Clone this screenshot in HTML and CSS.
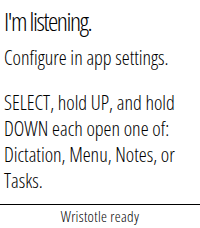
FILE: index.html
```html
<!DOCTYPE html>
<html>
<head>
    <title>Wristotle</title>
    <link rel="stylesheet" href="styles.css">
</head>
<body>
    <div id="screen">
        <div class="content">
            <h1 class="title">I'm listening.</h1>
            <p class="message">Configure in app settings.</p>
            <p class="message">SELECT, hold UP, and hold DOWN each open one of: Dictation, Menu, Notes, or Tasks.</p>
        </div>
        <div class="status">Wristotle ready</div>
    </div>
</body>
</html>
```

FILE: styles.css
```css
body {
    margin: 0;
    background-color: #fff;
    color: #000;
    font-family: "Open Sans", sans-serif;
    font-stretch: condensed;
}
#screen {
    width: 200px;
    height: 228px;
    display: flex;
    flex-direction: column;
}
.content {
    flex: 1;
    min-height: 0;
    padding: 5px 4px 0 4px;
}
.title {
    margin: 0 0 8px 0;
    font-size: 26px;
    font-weight: 350;
    line-height: 32px;
    letter-spacing: -1.4px;
}
.message {
    margin: 0 0 19px 0;
    font-size: 20px;
    font-weight: 350;
    line-height: 26px;
}
.message:last-child {
    margin-bottom: 0;
}
.status {
    height: 23px;
    border-top: 1px solid #000;
    font-size: 15px;
    font-weight: 350;
    line-height: 23px;
    text-align: center;
    letter-spacing: 0.3px;
}
```
